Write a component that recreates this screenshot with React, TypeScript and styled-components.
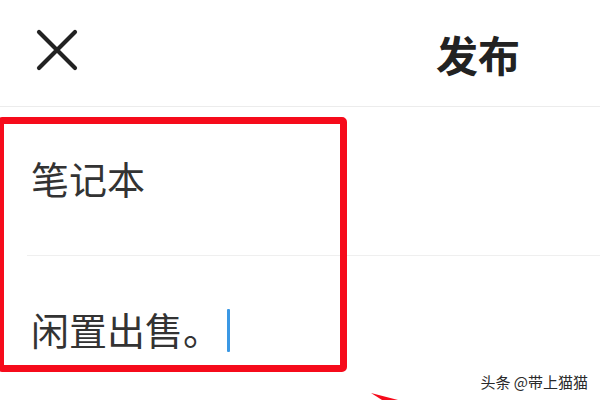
import React from "react";
import styled, { createGlobalStyle } from "styled-components";

const Global = createGlobalStyle`
  html, body { margin: 0; padding: 0; background: #fff; }
  body { font-family: "Noto Sans CJK SC", "Noto Sans", sans-serif; }
`;

const Page = styled.div`
  position: relative;
  width: 600px;
  height: 400px;
  overflow: hidden;
  background: #fff;
`;

const Header = styled.header`
  height: 107px;
  display: flex;
  align-items: center;
  justify-content: space-between;
  padding: 0 80px 0 35px;
  border-bottom: 1px solid #ececec;
  box-sizing: border-box;
`;

const CloseButton = styled.button`
  width: 44px;
  height: 44px;
  margin-top: -6px;
  padding: 0;
  border: none;
  background: none;
  display: flex;
  align-items: center;
  justify-content: center;
`;

const PublishButton = styled.span`
  font-size: 42px;
  line-height: 1;
  font-weight: 700;
  color: #222;
  margin-top: 2px;
`;

const Field = styled.div<{ $top: number; $bottom: number }>`
  padding: ${(p) => p.$top}px 0 ${(p) => p.$bottom}px 31px;
  font-size: 38px;
  line-height: 38px;
  color: #333;
  display: flex;
  align-items: center;
`;

const Divider = styled.div`
  margin-left: 27px;
  height: 1px;
  background: #efefef;
`;

const Caret = styled.span`
  display: inline-block;
  width: 3px;
  height: 43px;
  margin-left: 6px;
  margin-top: 4px;
  border-radius: 1px;
  background: #3b98e4;
`;

const Highlight = styled.div`
  position: absolute;
  left: -3px;
  top: 117px;
  width: 350px;
  height: 255px;
  box-sizing: border-box;
  border: 7px solid #f60b1b;
  border-radius: 5px;
  pointer-events: none;
`;

const Arrow = styled.svg`
  position: absolute;
  left: 360px;
  top: 385px;
`;

const Watermark = styled.div`
  position: absolute;
  right: 12px;
  bottom: 11px;
  font-size: 15px;
  line-height: 1;
  color: #2a2a2a;
  text-shadow: 0 0 2px #fff, 0 0 2px #fff;
`;

export default function App() {
  return (
    <Page>
      <Global />
      <Header>
        <CloseButton aria-label="关闭">
          <svg width="44" height="44" viewBox="0 0 44 44">
            <path d="M4 4 L40 40 M40 4 L4 40" stroke="#222" strokeWidth="4.2" strokeLinecap="round" />
          </svg>
        </CloseButton>
        <PublishButton>发布</PublishButton>
      </Header>
      <Field $top={52} $bottom={58}>笔记本</Field>
      <Divider />
      <Field $top={49} $bottom={0}>
        闲置出售。
        <Caret />
      </Field>
      <Highlight />
      <Arrow width="60" height="15" viewBox="0 0 60 15">
        <polygon points="11,8 38,15 22,15" fill="#f60b1b" />
      </Arrow>
      <Watermark>头条 @带上猫猫</Watermark>
    </Page>
  );
}
